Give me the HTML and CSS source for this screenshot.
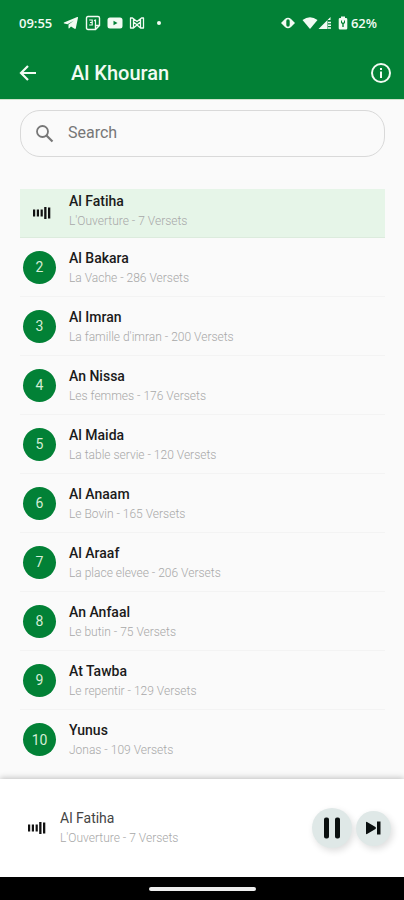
FILE: index.html
```html
<!DOCTYPE html>
<html lang="fr">
<head>
<meta charset="utf-8">
<meta name="viewport" content="width=device-width, initial-scale=1">
<title>Al Khouran</title>
<link rel="stylesheet" href="styles.css">
</head>
<body>
<header class="top">
  <div class="status">
    <span class="clock">09:55</span>
    <svg class="status-icon" width="16" height="14" viewBox="0 0 16 14" aria-hidden="true"><path fill="currentColor" d="M1 6.500 14.200 1c.6-.2 1 .1.8.8l-2.200 10.400c-.2.8-.7.9-1.300.6L8 10.500l-1.700 1.700c-.4.4-.8.2-.8-.3V8.600L11 4.500 4.500 8.200 1.200 7.500c-.6-.2-.6-.7-.2-1z"/></svg>
    <svg class="status-icon" width="16" height="16" viewBox="0 0 16 16" aria-hidden="true"><path fill="none" stroke="currentColor" stroke-width="1.400" d="M3 1.500h10q1.500 0 1.500 1.500v7.500l-4 4H3q-1.500 0-1.500-1.500V3Q1.500 1.500 3 1.500zM10.500 14.500v-4h4"/><path fill="none" stroke="currentColor" stroke-width="1.200" d="M4.200 5h3v5h-3M5 7.500h2.200M9 5.600l1.500-.5v5"/></svg>
    <svg class="status-icon" width="16" height="12" viewBox="0 0 16 12" aria-hidden="true"><path fill="currentColor" fill-rule="evenodd" d="M3 .5h10Q15.500.5 15.500 3v6q0 2.500-2.500 2.500H3Q.5 11.500.5 9V3Q.5.500 3 .500zM6.500 3.700v4.600l4-2.300z"/></svg>
    <svg class="status-icon" width="16" height="14" viewBox="0 0 16 14" aria-hidden="true"><path fill="none" stroke="currentColor" stroke-width="1.300" stroke-linejoin="round" d="M4.500 12H1.500V2h2L8 5.500 12.500 2h2v10h-3V6L8 8.800 4.500 6zM4.500 6V3M11.500 6V3M4.500 12 8 9l3.500 3"/></svg>
    <span class="dot"></span>
    <span class="status-right">
      <svg width="16" height="14" viewBox="0 0 16 14" aria-hidden="true"><path fill="none" stroke="currentColor" stroke-width="1.600" d="M8 2.500q2.500 0 2.500 2.500v4q0 2.500-2.500 2.500T5.500 9V5Q5.500 2.500 8 2.500z"/><path fill="currentColor" d="M5 3v8L1 7zM11 3v8l4-4z"/></svg>
      <span class="signals">
        <svg width="16" height="14" viewBox="0 0 16 14" aria-hidden="true"><path fill="currentColor" d="M.5 4Q8-1.500 15.500 4L8 13z"/></svg>
        <svg width="14" height="14" viewBox="0 0 14 14" aria-hidden="true"><path fill="currentColor" d="M.5 13 12.500 1v3H9.500v9z"/><path stroke="currentColor" stroke-width="1.500" d="M10 6.500h3M10 9.300h3M10 12.100h3"/></svg>
      </span>
      <span class="battery">
        <svg width="10" height="14" viewBox="0 0 10 14" aria-hidden="true"><path fill="currentColor" fill-rule="evenodd" d="M3 .5h4V2h1q1.300 0 1.300 1.300v9Q9.300 13.500 8 13.500H2Q.7 13.500.7 12.300v-9Q.7 2 2 2h1zM3 4.500v2.500l1.300 1V11h1.400V8L7 7V4.500H6v2H4v-2z"/></svg>
        <span>62%</span>
      </span>
    </span>
  </div>
  <div class="appbar">
    <button class="icon-button" type="button" aria-label="Retour"><svg width="20" height="20" viewBox="0 0 20 20"><path fill="none" stroke="currentColor" stroke-width="2.200" d="M18 10H3.500M10 3l-7 7 7 7"/></svg></button>
    <h1>Al Khouran</h1>
    <button class="icon-button" type="button" aria-label="Informations"><svg width="22" height="22" viewBox="0 0 22 22"><circle cx="11" cy="11" r="9" fill="none" stroke="currentColor" stroke-width="2"/><path fill="currentColor" d="M10 6h2v2h-2zM10 9.500h2V16h-2z"/></svg></button>
  </div>
</header>
<main>
  <label class="search">
    <svg width="20" height="20" viewBox="0 0 20 20" aria-hidden="true"><circle cx="7.500" cy="7.500" r="5.500" fill="none" stroke="currentColor" stroke-width="1.800"/><path stroke="currentColor" stroke-width="2.200" d="m11.500 11.500 6 6"/></svg>
    <input type="search" placeholder="Search" aria-label="Search">
  </label>
  <ol class="list">
    <li class="row playing"><svg class="bars" width="18" height="14" viewBox="0 0 18 14" aria-hidden="true"><path fill="currentColor" d="M0 3.500h2.200v7H0zM3.800 3.500H6v7H3.800zM7.600 3.500h2.200v7H7.600zM11.200 1h2.300v12h-2.300zM15 1.500h2.300v11H15z"/></svg><div><h2>Al Fatiha</h2><p>L'Ouverture - 7 Versets</p></div></li>
    <li class="row"><span class="num">2</span><div><h2>Al Bakara</h2><p>La Vache - 286 Versets</p></div></li>
    <li class="row"><span class="num">3</span><div><h2>Al Imran</h2><p>La famille d'imran - 200 Versets</p></div></li>
    <li class="row"><span class="num">4</span><div><h2>An Nissa</h2><p>Les femmes - 176 Versets</p></div></li>
    <li class="row"><span class="num">5</span><div><h2>Al Maida</h2><p>La table servie - 120 Versets</p></div></li>
    <li class="row"><span class="num">6</span><div><h2>Al Anaam</h2><p>Le Bovin - 165 Versets</p></div></li>
    <li class="row"><span class="num">7</span><div><h2>Al Araaf</h2><p>La place elevee - 206 Versets</p></div></li>
    <li class="row"><span class="num">8</span><div><h2>An Anfaal</h2><p>Le butin - 75 Versets</p></div></li>
    <li class="row"><span class="num">9</span><div><h2>At Tawba</h2><p>Le repentir - 129 Versets</p></div></li>
    <li class="row"><span class="num">10</span><div><h2>Yunus</h2><p>Jonas - 109 Versets</p></div></li>
  </ol>
</main>
<section class="player" aria-label="Lecteur">
  <svg class="bars" width="18" height="14" viewBox="0 0 18 14" aria-hidden="true"><path fill="currentColor" d="M0 3.500h2.200v7H0zM3.800 3.500H6v7H3.800zM7.600 3.500h2.200v7H7.600zM11.200 1h2.300v12h-2.300zM15 1.500h2.300v11H15z"/></svg>
  <div class="track"><h2>Al Fatiha</h2><p>L'Ouverture - 7 Versets</p></div>
  <div class="controls">
    <button class="round pause" type="button" aria-label="Pause"><svg width="18" height="22" viewBox="0 0 18 22"><path fill="currentColor" d="M3 .5h1q2 0 2 2v17q0 2-2 2H3q-2 0-2-2v-17q0-2 2-2zM14 .5h1q2 0 2 2v17q0 2-2 2h-1q-2 0-2-2v-17q0-2 2-2z"/></svg></button>
    <button class="round" type="button" aria-label="Suivant"><svg width="16" height="14" viewBox="0 0 16 14"><path fill="currentColor" d="M0 1.500q0-1 1-.5l8.500 5q1 1 0 2L1 13q-1 .5-1-.5zM11 .5h3.500v13H11z"/></svg></button>
  </div>
</section>
<footer class="nav"><span class="home"></span></footer>
</body>
</html>
```
FILE: styles.css
```css
* {
  box-sizing: border-box;
}

body {
  margin: 0;
  min-height: 100vh;
  display: flex;
  flex-direction: column;
  background: #fafafa;
  color: #1b1b1b;
  font-family: Roboto, sans-serif;
}

h1, h2, p, ol {
  margin: 0;
  padding: 0;
}

button {
  border: 0;
  padding: 0;
  color: inherit;
  cursor: pointer;
}

svg {
  display: block;
  flex: none;
}

.top {
  background: #028136;
  color: #f2fbf3;
  border-bottom: 1px solid #cfe3cd;
}

.status {
  height: 46px;
  padding: 0 27px 0 19px;
  display: flex;
  align-items: center;
  font: 600 13px/16px "Open Sans", sans-serif;
}

.status-icon {
  margin-left: 6px;
}

.clock {
  margin-right: 5px;
}

.dot {
  width: 4px;
  height: 4px;
  margin-left: 12px;
  border-radius: 50%;
  background: currentColor;
}

.status-right,
.signals,
.battery {
  display: flex;
  align-items: center;
}

.status-right {
  margin-left: auto;
  gap: 6px;
}

.battery {
  gap: 3px;
}

.appbar {
  height: 53px;
  padding: 0 12px 0 18px;
  display: flex;
  align-items: center;
}

.icon-button {
  background: none;
}

.appbar h1 {
  flex: 1;
  margin-left: 33px;
  font-size: 20px;
  line-height: 24px;
  font-weight: 500;
}

main {
  flex: 1;
  padding: 10px 19px 0 20px;
}

.search {
  height: 47px;
  padding: 0 14px;
  display: flex;
  align-items: center;
  gap: 13px;
  border: 1px solid #d9d9d9;
  border-radius: 20px;
  color: #777;
}

.search input {
  flex: 1;
  min-width: 0;
  padding: 0 0 2px;
  border: 0;
  outline: 0;
  background: none;
  color: #333;
  font: 400 16px/20px Roboto, sans-serif;
}

.search input::placeholder {
  color: #777;
  opacity: 1;
}

.list {
  margin-top: 32px;
  list-style: none;
}

.row {
  height: 59px;
  padding-left: 3px;
  display: flex;
  align-items: center;
  gap: 13px;
  border-bottom: 1px solid #f3f3f3;
}

.row:last-child {
  border-bottom: 0;
}

.row div {
  padding-top: 2px;
}

.playing {
  height: 49px;
  padding-left: 13px;
  gap: 18px;
  background: #e6f5e8;
  border-color: #dcebdd;
}

.playing div {
  margin-bottom: 5px;
}

.num {
  width: 33px;
  height: 33px;
  display: grid;
  place-items: center;
  border-radius: 50%;
  background: #028136;
  color: #d5edd6;
  font-size: 14px;
}

h2 {
  font-size: 14px;
  line-height: 19px;
  font-weight: 500;
}

p {
  font-size: 12px;
  line-height: 20px;
  font-weight: 300;
  color: #a8a8a8;
}

.bars {
  color: #111;
}

.player {
  position: relative;
  height: 98px;
  padding: 0 13px 0 28px;
  display: flex;
  align-items: center;
  background: #fff;
  box-shadow: 0 -1px 6px #0000003d;
}

.track {
  flex: 1;
  margin-left: 14px;
}

.track h2 {
  font-weight: 400;
  color: #444;
}

.controls {
  display: flex;
  align-items: center;
  gap: 4px;
}

.round {
  width: 35px;
  height: 35px;
  display: grid;
  place-items: center;
  border-radius: 50%;
  background: #dfe8e7;
  color: #0a0f0f;
  box-shadow: 2px 3px 7px #00000022;
}

.pause {
  width: 40px;
  height: 40px;
}

.nav {
  position: relative;
  height: 23px;
  display: grid;
  place-items: center;
  background: #000;
}

.home {
  width: 107px;
  height: 4px;
  border-radius: 2px;
  background: #eee;
}
```
